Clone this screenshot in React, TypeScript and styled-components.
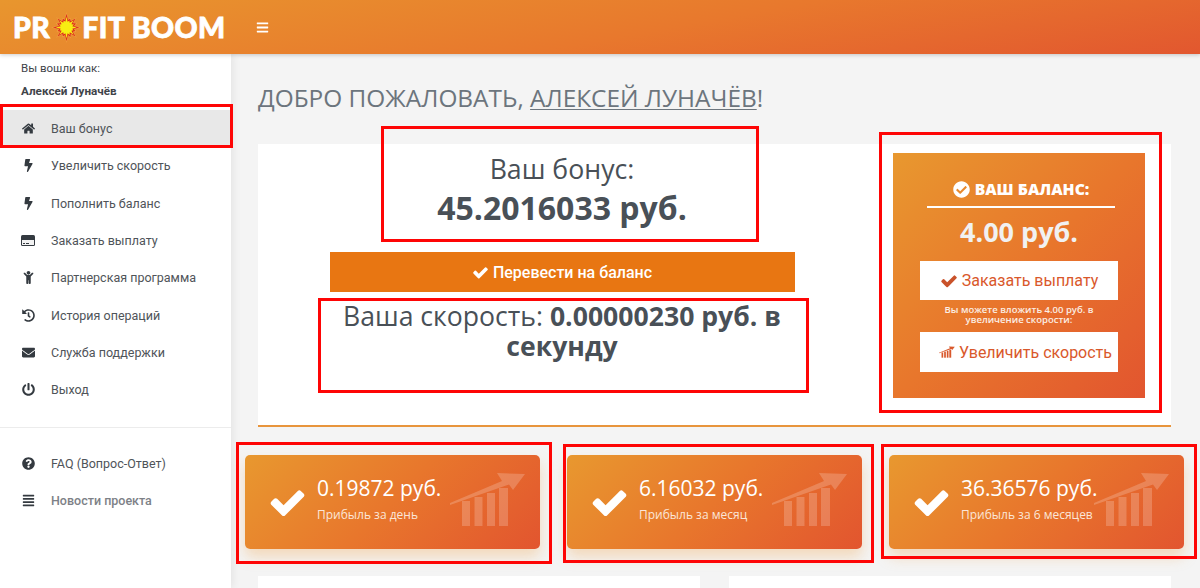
import React from 'react';
import styled, { createGlobalStyle } from 'styled-components';
import {
	FaAlignJustify,
	FaBars,
	FaBolt,
	FaCheckCircle,
	FaChild,
	FaEnvelope,
	FaHistory,
	FaHome,
	FaPowerOff,
	FaQuestionCircle,
} from 'react-icons/fa';

const GRADIENT = 'linear-gradient(135deg, #e8982f 0%, #e8762c 50%, #e2552f 100%)';

const GlobalStyle = createGlobalStyle`
	html, body {
		margin: 0;
		padding: 0;
		height: 588px;
		overflow: hidden;
		background: #f4f4f4;
		font-family: 'Roboto', 'Liberation Sans', sans-serif;
	}
	* {
		box-sizing: border-box;
	}
`;

const Page = styled.div`
	position: relative;
	width: 1200px;
	height: 588px;
	overflow: hidden;
	display: flex;
	flex-direction: column;
`;

const Header = styled.header`
	height: 54px;
	flex: none;
	display: flex;
	align-items: center;
	padding-left: 13px;
	background: linear-gradient(170deg, #e8962e 0%, #e8782d 55%, #e2572f 100%);
	box-shadow: 0 1px 4px rgba(0, 0, 0, 0.2);
	position: relative;
	z-index: 2;
`;

const Logo = styled.div`
	width: 243px;
	display: flex;
	align-items: center;
	font-family: 'Lato', 'Open Sans', sans-serif;
	font-weight: 900;
	font-size: 28.5px;
	letter-spacing: 0.4px;
	-webkit-text-stroke: 0.8px #fff;
	color: #fff;
	white-space: nowrap;
	svg {
		margin: 0 0 0 1px;
	}
`;

const Burger = styled.span`
	color: #fff;
	font-size: 13px;
	display: flex;
`;

const Main = styled.div`
	flex: 1;
	display: flex;
	min-height: 0;
`;

const Sidebar = styled.aside`
	width: 231px;
	flex: none;
	background: #fff;
	box-shadow: 2px 0 8px rgba(0, 0, 0, 0.07);
	padding-top: 8px;
	font-size: 12px;
	color: #495057;
`;

const UserLabel = styled.div`
	padding-left: 21px;
	font-size: 11.5px;
	line-height: 13px;
	color: #3f444a;
`;

const UserName = styled.div`
	padding-left: 21px;
	margin-top: 9px;
	margin-bottom: 12px;
	font-size: 11.7px;
	line-height: 14px;
	font-weight: 700;
	color: #3f444a;
`;

const NavItem = styled.div<{ $active?: boolean; $muted?: boolean }>`
	height: 37.3px;
	display: flex;
	align-items: center;
	padding-left: 21px;
	font-size: 12.5px;
	background: ${props => (props.$active ? '#e8e8e8' : 'transparent')};
	color: ${props => (props.$muted ? '#7d8187' : '#4f5459')};
	font-weight: ${props => (props.$muted ? 500 : 400)};
`;

const NavIcon = styled.span`
	width: 30px;
	flex: none;
	display: flex;
	align-items: center;
	color: #343a40;
	font-size: 13px;
	svg {
		display: block;
	}
`;

const NavGlyph = styled.span`
	width: 14px;
	display: flex;
	justify-content: center;
`;

const NavDivider = styled.div`
	height: 1px;
	background: #ececec;
	margin: 19px 0 16px;
`;

const Content = styled.main`
	flex: 1;
	padding: 0 29px 0 27px;
	min-width: 0;
`;

const Title = styled.h1`
	margin: 27px 0 30px;
	font-family: 'Open Sans', sans-serif;
	font-size: 24.4px;
	line-height: 33px;
	font-weight: 400;
	color: #6c757d;
	text-transform: uppercase;
	u {
		text-underline-offset: 2px;
		text-decoration-thickness: 1px;
	}
`;

const Panel = styled.section`
	height: 283px;
	background: #fff;
	border-bottom: 2px solid #e8953c;
	display: flex;
	padding: 9px 26px 0 0;
	font-family: 'Open Sans', sans-serif;
	color: #495057;
`;

const BonusColumn = styled.div`
	width: 608px;
	flex: none;
	margin-right: 27px;
	display: flex;
	flex-direction: column;
	align-items: center;
	text-align: center;
`;

const BonusLabel = styled.div`
	font-size: 26.7px;
	line-height: 32px;
`;

const BonusValue = styled.div`
	margin-top: 2px;
	font-size: 32px;
	line-height: 42px;
	font-weight: 700;
`;

const TransferButton = styled.div`
	margin-top: 23px;
	width: 465px;
	height: 40px;
	background: #e87612;
	color: #fff;
	display: flex;
	align-items: center;
	justify-content: center;
	gap: 4px;
	font-family: 'Roboto', sans-serif;
	font-size: 16px;
	font-weight: 500;
`;

const Speed = styled.div`
	margin-top: 9px;
	width: 470px;
	font-size: 26.6px;
	line-height: 30px;
	b {
		font-weight: 700;
	}
`;

const BalanceBox = styled.div`
	width: 252px;
	height: 245px;
	background: ${GRADIENT};
	display: flex;
	flex-direction: column;
	align-items: center;
	color: #fff;
`;

const BalanceTitle = styled.div`
	margin: 26px 0 0 4px;
	width: 188px;
	padding-bottom: 7px;
	border-bottom: 2px solid #fff;
	display: flex;
	align-items: center;
	justify-content: center;
	gap: 5px;
	font-size: 15.7px;
	line-height: 20px;
	font-weight: 800;
`;

const BalanceValue = styled.div`
	margin-top: 6px;
	font-size: 27px;
	line-height: 36px;
	font-weight: 700;
	color: #f1f1f1;
`;

const BalanceButton = styled.div<{ $tight?: boolean }>`
	width: 198px;
	height: 40px;
	background: #fff;
	color: #d9582b;
	display: flex;
	align-items: center;
	justify-content: ${props => (props.$tight ? 'flex-end' : 'center')};
	padding-right: ${props => (props.$tight ? '6px' : '0')};
	gap: 4px;
	font-family: 'Roboto', sans-serif;
	font-size: 16px;
`;

const BalanceTopButton = styled(BalanceButton)`
	margin-top: 11px;
	height: 39px;
	svg {
		fill: #c9522a;
	}
`;

const BalanceNote = styled.div`
	margin: 5px 0 7px;
	width: 200px;
	text-align: center;
	font-size: 9.5px;
	line-height: 10px;
	font-weight: 600;
	color: #fbeee4;
`;

const StatRow = styled.div`
	margin: 28px -13px 0;
	display: flex;
	gap: 27px;
`;

const StatCard = styled.div`
	position: relative;
	width: 295px;
	height: 94px;
	border-radius: 5px;
	background: ${GRADIENT};
	box-shadow: 0 8px 14px rgba(240, 165, 80, 0.35);
	display: flex;
	align-items: center;
	padding-left: 23px;
	color: #fff;
	font-family: 'Open Sans', sans-serif;
`;

const StatCheck = styled.span`
	width: 49px;
	flex: none;
	display: flex;
`;

const StatValue = styled.div`
	font-size: 21px;
	line-height: 24px;
	margin-top: -5px;
`;

const StatLabel = styled.div`
	margin-top: 7px;
	font-size: 12px;
	line-height: 16px;
	color: #fbe6d8;
`;

const StatChart = styled.svg`
	position: absolute;
	right: 14px;
	top: 17px;
`;

const LowerRow = styled.div`
	margin-top: 27px;
	display: flex;
	justify-content: space-between;
`;

const LowerCard = styled.div`
	width: 442px;
	height: 60px;
	background: #fff;
`;

const RedMark = styled.div<{ $x: number; $y: number; $w: number; $h: number }>`
	position: absolute;
	left: ${props => props.$x}px;
	top: ${props => props.$y}px;
	width: ${props => props.$w}px;
	height: ${props => props.$h}px;
	border: 3px solid #fe0505;
	z-index: 5;
`;

function BurstIcon(): JSX.Element {
	const outer: string[] = [];
	const inner: string[] = [];
	const core: string[] = [];
	const ray = [15, 11, 15, 12, 16, 11, 15, 11, 16, 12, 15, 11, 16, 11, 15, 12];
	ray.forEach((r, i) => {
		const a = (i * Math.PI) / 8;
		const b = a + Math.PI / 16;
		outer.push(`${16 + Math.cos(a) * r},${16 + Math.sin(a) * r}`);
		outer.push(`${16 + Math.cos(b) * 9},${16 + Math.sin(b) * 9}`);
		inner.push(`${16 + Math.cos(a) * r * 0.88},${16 + Math.sin(a) * r * 0.88}`);
		inner.push(`${16 + Math.cos(b) * 7.8},${16 + Math.sin(b) * 7.8}`);
		core.push(`${16 + Math.cos(a) * r * 0.7},${16 + Math.sin(a) * r * 0.7}`);
		core.push(`${16 + Math.cos(b) * 6},${16 + Math.sin(b) * 6}`);
	});
	return (
		<svg width="31" height="31" viewBox="0 0 32 32">
			<polygon points={outer.join(' ')} fill="#f0a040" />
			<polygon points={inner.join(' ')} fill="#dd2a1c" />
			<polygon points={core.join(' ')} fill="#f7ee12" />
		</svg>
	);
}

function GrowthShape(): JSX.Element {
	return (
		<>
			<path d="M0 31 L52 9 L47 1 L75 2 L63 18 L59 12.5 L0 33 Z" />
			<rect x="12" y="29" width="8" height="25" />
			<rect x="24.5" y="25" width="8" height="29" />
			<rect x="37" y="21" width="8" height="33" />
			<rect x="49" y="16" width="9" height="38" />
		</>
	);
}

function CheckIcon({ size }: { size: number }): JSX.Element {
	return (
		<svg width={size} height={size} viewBox="0 0 1792 1792" fill="currentColor">
			<path d="M1671 566q0 40-28 68l-724 724-136 136q-28 28-68 28t-68-28l-136-136-362-362q-28-28-28-68t28-68l136-136q28-28 68-28t68 28l294 295 656-657q28-28 68-28t68 28l136 136q28 28 28 68z" />
		</svg>
	);
}

function CardIcon(): JSX.Element {
	return (
		<svg width="14" height="11" viewBox="0 0 14 11">
			<rect x="0" y="0" width="14" height="11" rx="1.5" fill="#343a40" />
			<rect x="1" y="5" width="12" height="5" fill="#f2f2f2" />
			<rect x="2" y="8" width="2" height="1" fill="#343a40" />
			<rect x="5" y="8" width="3" height="1" fill="#343a40" />
		</svg>
	);
}

const NAV = [
	{ icon: <FaHome />, text: 'Ваш бонус', active: true },
	{ icon: <FaBolt />, text: 'Увеличить скорость' },
	{ icon: <FaBolt />, text: 'Пополнить баланс' },
	{ icon: <CardIcon />, text: 'Заказать выплату' },
	{ icon: <FaChild />, text: 'Партнерская программа' },
	{ icon: <FaHistory />, text: 'История операций' },
	{ icon: <FaEnvelope />, text: 'Служба поддержки' },
	{ icon: <FaPowerOff />, text: 'Выход' },
];

const STATS = [
	{ value: '0.19872 руб.', label: 'Прибыль за день' },
	{ value: '6.16032 руб.', label: 'Прибыль за месяц' },
	{ value: '36.36576 руб.', label: 'Прибыль за 6 месяцев' },
];

export default function App(): JSX.Element {
	return (
		<Page>
			<GlobalStyle />
			<Header>
				<Logo>
					PR
					<BurstIcon />
					FIT BOOM
				</Logo>
				<Burger>
					<FaBars />
				</Burger>
			</Header>
			<Main>
				<Sidebar>
					<UserLabel>Вы вошли как:</UserLabel>
					<UserName>Алексей Луначёв</UserName>
					{NAV.map(item => (
						<NavItem key={item.text} $active={item.active}>
							<NavIcon>
								<NavGlyph>{item.icon}</NavGlyph>
							</NavIcon>
							{item.text}
						</NavItem>
					))}
					<NavDivider />
					<NavItem>
						<NavIcon>
							<NavGlyph>
								<FaQuestionCircle />
							</NavGlyph>
						</NavIcon>
						FAQ (Вопрос-Ответ)
					</NavItem>
					<NavItem $muted>
						<NavIcon>
							<NavGlyph>
								<FaAlignJustify />
							</NavGlyph>
						</NavIcon>
						Новости проекта
					</NavItem>
				</Sidebar>
				<Content>
					<Title>
						Добро пожаловать, <u>Алексей Луначёв</u>!
					</Title>
					<Panel>
						<BonusColumn>
							<BonusLabel>Ваш бонус:</BonusLabel>
							<BonusValue>45.2016033 руб.</BonusValue>
							<TransferButton>
								<CheckIcon size={17} />
								Перевести на баланс
							</TransferButton>
							<Speed>
								Ваша скорость: <b>0.00000230 руб. в секунду</b>
							</Speed>
						</BonusColumn>
						<BalanceBox>
							<BalanceTitle>
								<FaCheckCircle size={17} />
								ВАШ БАЛАНС:
							</BalanceTitle>
							<BalanceValue>4.00 руб.</BalanceValue>
							<BalanceTopButton>
								<CheckIcon size={18} />
								Заказать выплату
							</BalanceTopButton>
							<BalanceNote>
								Вы можете вложить 4.00 руб. в увеличение скорости:
							</BalanceNote>
							<BalanceButton $tight>
								<svg width="16" height="12" viewBox="0 0 76 54" fill="#d9582b">
									<GrowthShape />
								</svg>
								Увеличить скорость
							</BalanceButton>
						</BalanceBox>
					</Panel>
					<StatRow>
						{STATS.map(stat => (
							<StatCard key={stat.label}>
								<StatCheck>
									<CheckIcon size={39} />
								</StatCheck>
								<div>
									<StatValue>{stat.value}</StatValue>
									<StatLabel>{stat.label}</StatLabel>
								</div>
								<StatChart width="76" height="54" viewBox="0 0 76 54" fill="rgba(255,255,255,0.2)">
									<GrowthShape />
								</StatChart>
							</StatCard>
						))}
					</StatRow>
					<LowerRow>
						<LowerCard />
						<LowerCard />
					</LowerRow>
				</Content>
			</Main>
			<RedMark $x={0} $y={104} $w={233} $h={44} />
			<RedMark $x={381} $y={126} $w={378} $h={116} />
			<RedMark $x={318} $y={298} $w={491} $h={95} />
			<RedMark $x={879} $y={132} $w={283} $h={281} />
			<RedMark $x={236} $y={442} $w={316} $h={122} />
			<RedMark $x={563} $y={444} $w={311} $h={119} />
			<RedMark $x={881} $y={444} $w={316} $h={115} />
		</Page>
	);
}
